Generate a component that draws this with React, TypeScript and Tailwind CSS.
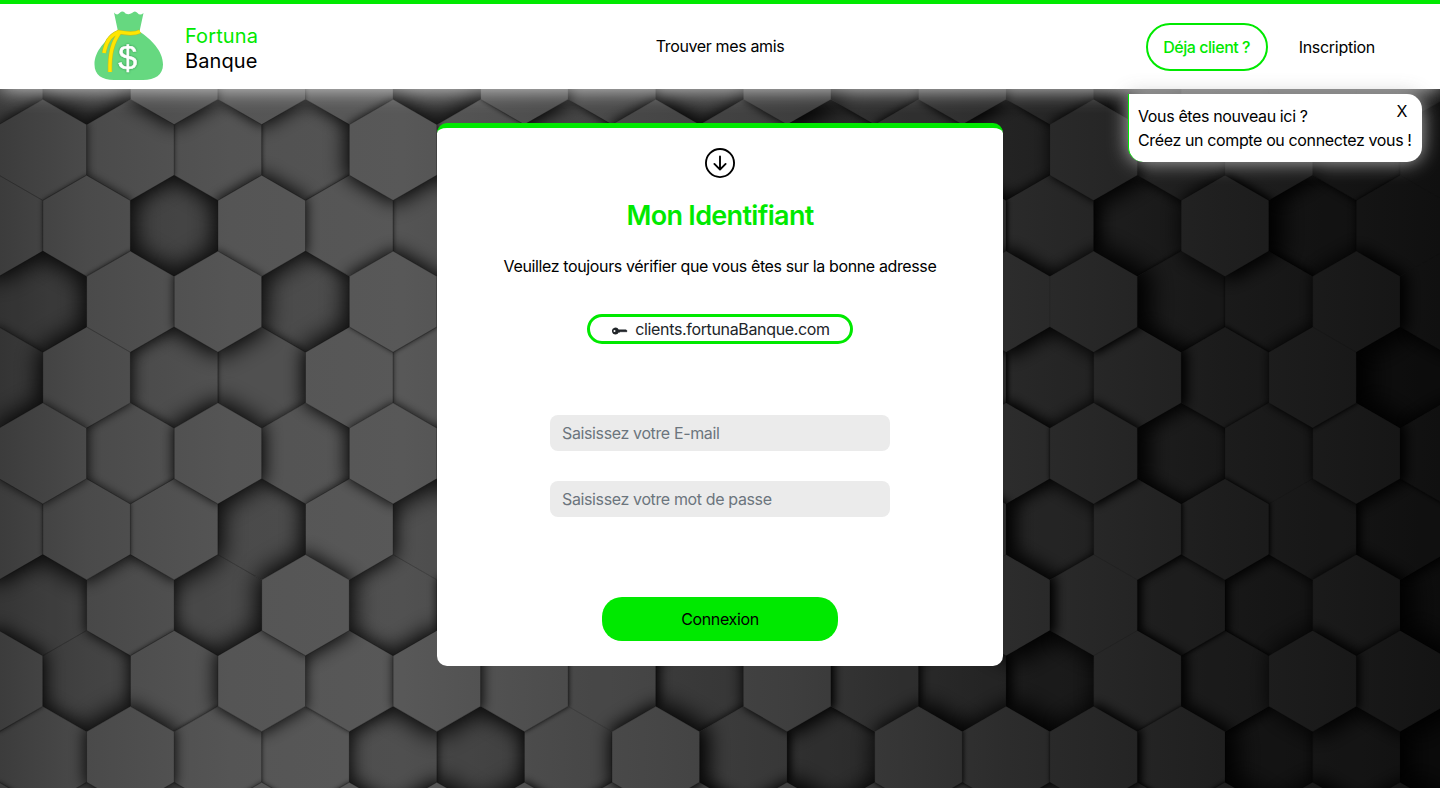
import React from "react";

const W = 87.57;
const R = 50.55;
const FIRST_ROW = -1;

// Relative elevation of every tile, row by row from the top.
const HEIGHTS: number[][] = [
  [4, 1.5, 8, 7, 6.5, 2, 7, 5, 3.5, 7, 3, 5, 4, 1, 4, 4, 4],
  [6, 5, 4.8, 4, 8, 6.5, 3.5, 7, 6, 1.5, 4, 2.5, 6, 4, 5, 2.5, 3],
  [6, 6.2, 1, 7, 4.8, 4, 5, 5, 5, 5, 5, 5, 4.5, 2, 6.5, 1.5, 3],
  [1, 7, 8, 2, 7.2, 5, 5, 5, 5, 5, 5, 7, 7, 2.2, 3, 5.5, 3],
  [2, 7, 4.2, 3.5, 7, 6.5, 5, 5, 5, 5, 5, 4.8, 4, 5.5, 3.5, 5.5, 0],
  [8, 5.8, 8, 4.5, 8, 7.5, 5, 5, 5, 5, 5, 6, 6.5, 2.5, 4, 5, 3],
  [6.8, 7, 6.5, 2, 6, 3, 5, 5, 5, 5, 5, 7, 3.5, 5, 4.5, 4, 2.5],
  [2.5, 4.5, 2, 9, 3, 4, 5, 5, 5, 5, 5, 7, 5, 3.5, 2.2, 5, 0.5],
  [6, 2.5, 5, 8, 6, 7, 5, 4.5, 2.5, 5, 3.5, 2.5, 0.5, 5, 3, 7, 6],
  [5.5, 8, 5.8, 5.6, 2.5, 1, 4.5, 7.5, 3.5, 2, 6.5, 6.3, 7, 5.5, 1, 3, -1],
  [6, 5, 5, 6, 6, 6, 6, 6, 6, 6, 6, 6, 5, 6, 6, 6, 6],
];

const centerOf = (row: number, k: number) => {
  const r = row + FIRST_ROW;
  const even = r % 2 === 0;
  return { x: (even ? 42.8 : -1) + W * k, y: 149.9 + 75.88 * r };
};

const hex = (x: number, y: number, size = R) => {
  const w = (size * W) / R / 2;
  return [
    [x, y - size],
    [x + w, y - size / 2],
    [x + w, y + size / 2],
    [x, y + size],
    [x - w, y + size / 2],
    [x - w, y - size / 2],
  ]
    .map((p) => p[0].toFixed(1) + "," + p[1].toFixed(1))
    .join(" ");
};

const neighbours = (row: number, k: number): [number, number][] => {
  const even = (row + FIRST_ROW) % 2 === 0;
  const left = even ? k : k - 1;
  return [
    [row, k - 1],
    [row, k + 1],
    [row - 1, left],
    [row - 1, left + 1],
    [row + 1, left],
    [row + 1, left + 1],
  ];
};

function Tile({ row, k }: { row: number; k: number }) {
  const { x, y } = centerOf(row, k);
  const h = HEIGHTS[row][k];
  const points = hex(x, y);
  const id = "tile-" + row + "-" + k;
  const side = Math.max(0, Math.min(1, (x - 420) / 500));
  return (
    <g clipPath={"url(#" + id + ")"}>
      <clipPath id={id}>
        <polygon points={points} />
      </clipPath>
      <polygon points={points} fill="#000" opacity={Math.max(0, 5 - h) * (0.04 + side * 0.04)} />
      {neighbours(row, k).map(([nr, nk]) => {
        const other = HEIGHTS[nr]?.[nk];
        if (other === undefined || other <= h) return null;
        const diff = other - h;
        const c = centerOf(nr, nk);
        const level = Math.max(1, Math.min(7, Math.round(diff * 1.5)));
        const shift = side * diff * 1.7;
        return (
          <polygon
            key={nr + "-" + nk}
            points={hex(c.x + shift, c.y, R + level * (0.65 + side * 0.3))}
            fill="#000"
            opacity={Math.min(1, 0.5 + diff * 0.13 + side * 0.3)}
            filter={"url(#soft" + level + ")"}
          />
        );
      })}
      <polygon points={points} fill="none" stroke="#000" strokeOpacity={0.28 - side * 0.16} strokeWidth="1" />
    </g>
  );
}

function Backdrop() {
  return (
    <svg className="absolute inset-0 h-full w-full" viewBox="0 0 1440 788" preserveAspectRatio="none" aria-hidden="true">
      <defs>
        <linearGradient id="base" x1="0" x2="1440" y1="0" y2="0" gradientUnits="userSpaceOnUse">
          <stop offset="0" stopColor="#3c3c3c" />
          <stop offset="0.06" stopColor="#4a4a4a" />
          <stop offset="0.16" stopColor="#555555" />
          <stop offset="0.28" stopColor="#585858" />
          <stop offset="0.4" stopColor="#4b4b4b" />
          <stop offset="0.55" stopColor="#3e3e3e" />
          <stop offset="0.7" stopColor="#2c2c2c" />
          <stop offset="0.85" stopColor="#1f1f1f" />
          <stop offset="1" stopColor="#141414" />
        </linearGradient>
        {[1, 2, 3, 4, 5, 6, 7].map((n) => (
          <filter key={n} id={"soft" + n} x="-50%" y="-50%" width="200%" height="200%">
            <feGaussianBlur stdDeviation={0.6 + n * 1.7} />
          </filter>
        ))}
      </defs>
      <rect width="1440" height="788" fill="url(#base)" />
      {HEIGHTS.map((cells, row) => cells.map((_, k) => <Tile key={row + "-" + k} row={row} k={k} />))}
    </svg>
  );
}

function MoneyBag() {
  return (
    <svg className="h-[70px] w-[70px]" viewBox="0 0 70 70" aria-hidden="true">
      <path
        d="M20 1.5Q23 5 25.5 2Q29 -1 31.5 2.5Q35 4 38 2Q41 -1 43.5 2Q46 5 49.5 2L45.5 20.5C57 28 69 40 69 53.500C69 64 61 69 49 69H20C8 69 .5 64 .5 53.500C.5 40 12 28 24 20.500Z"
        fill="#66d880"
      />
      <path d="M46 20.500C39 24 30 22 24.500 21C15 25 12 32 10 42M26 21C18 32 15.500 43 16 61" fill="none" stroke="#b9bd2a" strokeWidth="4.600" />
      <path d="M46 20.500C39 24 30 22 24.500 21C15 25 12 32 10 42M26 21C18 32 15.500 43 16 61" fill="none" stroke="#ffe600" strokeWidth="3.400" />
      <text
        x="33.5"
        y="57.5"
        textAnchor="middle"
        fontSize="34"
        fontFamily="Liberation Sans, sans-serif"
        fill="#fff"
        stroke="#fff"
        strokeWidth="0.5"
        style={{ filter: "drop-shadow(0 0 1px #2f8f4c)" }}
      >
        $
      </text>
    </svg>
  );
}

export default function App() {
  return (
    <div className="relative flex h-[788px] w-full flex-col overflow-hidden bg-[#222] font-['Inter',sans-serif] text-base tracking-[-0.37px] text-black">
      <Backdrop />
      <header className="relative grid h-[89px] shrink-0 grid-cols-3 items-center border-t-4 border-[#00e900] bg-white pb-[2px] shadow-[0_0_20px_rgba(220,220,220,1)]">
        <div className="flex items-center gap-[21px] pl-[94px]">
          <MoneyBag />
          <div className="pt-[7px] text-xl leading-[25px] tracking-[0.1px]">
            <p className="text-[#00e900]">Fortuna</p>
            <p>Banque</p>
          </div>
        </div>
        <a className="text-center">Trouver mes amis</a>
        <nav className="flex items-center justify-end gap-[31px] pr-[65px] pt-[2px]">
          <button className="h-12 w-[122px] rounded-3xl border-2 border-[#00e900] font-medium tracking-[-0.45px] text-[#00e900]">Déja client ?</button>
          <a className="tracking-[-0.28px]">Inscription</a>
        </nav>
      </header>

      <aside className="absolute left-[1128px] top-[94px] h-[68px] w-[294px] rounded-[0_15px_15px_15px] border-l border-[#00e900] bg-white pl-[9px] pt-[10px] leading-6 whitespace-nowrap shadow-[0_0_20px_rgba(200,200,200,0.9)]">
        <p>Vous êtes nouveau ici ?</p>
        <p>Créez un compte ou connectez vous !</p>
        <button className="absolute right-[15px] top-[5px]">X</button>
      </aside>

      <main className="relative mx-auto mt-[34px] flex h-[543px] w-[566px] flex-col items-center rounded-[10px] border-t-[5px] border-[#00e900] bg-white">
        <svg className="mt-5 h-[30px] w-[30px] shrink-0" viewBox="0 0 16 16" fill="currentColor">
          <path fillRule="evenodd" d="M1 8a7 7 0 1 0 14 0A7 7 0 0 0 1 8m15 0A8 8 0 1 1 0 8a8 8 0 0 1 16 0M8.500 4.500a.5.5 0 0 0-1 0v5.793L5.354 8.146a.5.5 0 1 0-.708.708l3 3a.5.5 0 0 0 .708 0l3-3a.5.5 0 0 0-.708-.708L8.500 10.293z" />
        </svg>
        <h1 className="mt-[21px] text-[27px] leading-[34px] font-semibold tracking-[-0.68px] text-[#00e900]">Mon Identifiant</h1>
        <p className="mt-[21px] leading-6">Veuillez toujours vérifier que vous êtes sur la bonne adresse</p>
        <div className="mt-9 flex h-[30px] w-[266px] shrink-0 items-center justify-center gap-[7px] rounded-full border-3 border-[#00e900] pl-[2px] text-[#212529]">
          <svg className="mt-[3px] h-4 w-4" viewBox="0 0 16 16" fill="currentColor">
            <path d="M3.500 11.500a3.500 3.500 0 1 1 3.163-5H14L15.500 8 14 9.500l-1-1-1 1-1-1-1 1-1-1-1 1H6.663a3.500 3.500 0 0 1-3.163 2M2.500 9a1 1 0 1 0 0-2 1 1 0 0 0 0 2" />
          </svg>
          <span className="tracking-[-0.34px]">clients.fortunaBanque.com</span>
        </div>
        <input className="mt-[71px] h-9 w-[340px] shrink-0 rounded-lg bg-[#ebebeb] px-3 placeholder:text-[#6c757d]" placeholder="Saisissez votre E-mail" />
        <input className="mt-[30px] h-9 w-[340px] shrink-0 rounded-lg bg-[#ebebeb] px-3 placeholder:text-[#6c757d]" type="password" placeholder="Saisissez votre mot de passe" />
        <button className="mt-20 h-11 w-[236px] shrink-0 rounded-[20px] bg-[#00e900]">Connexion</button>
      </main>
    </div>
  );
}
